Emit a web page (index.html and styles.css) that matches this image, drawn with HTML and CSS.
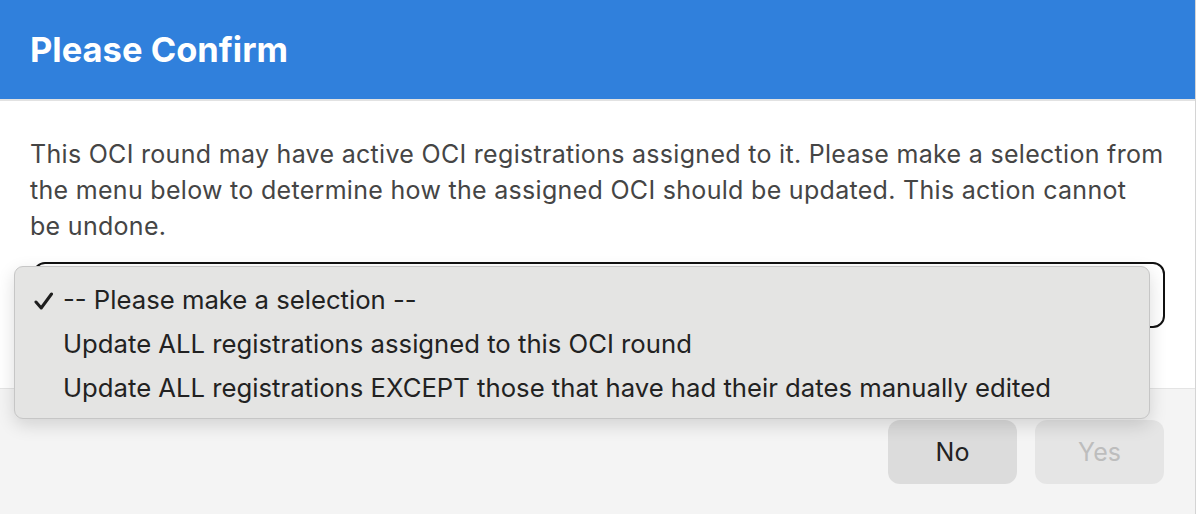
FILE: index.html
```html
<!DOCTYPE html>
<html>
<head>
<meta charset="utf-8">
<link rel="stylesheet" href="styles.css">
</head>
<body>
<div class="modal">
  <header class="modal-header">
    <h1 class="modal-title">Please Confirm</h1>
  </header>
  <section class="modal-body">
    <p class="message">This OCI round may have active OCI registrations assigned to it. Please make a selection from the menu below to determine how the assigned OCI should be updated. This action cannot<br>be undone.</p>
    <div class="select-wrap">
      <div class="select"></div>
      <ul class="menu">
        <li class="menu-item selected"><svg class="check" width="20" height="18" viewBox="0 0 20 18"><path d="M2 10 L7.2 16 L17.5 2" fill="none" stroke="#1e1e1e" stroke-width="3" stroke-linecap="round" stroke-linejoin="round"/></svg>-- Please make a selection --</li>
        <li class="menu-item">Update ALL registrations assigned to this OCI round</li>
        <li class="menu-item">Update ALL registrations EXCEPT those that have had their dates manually edited</li>
      </ul>
    </div>
  </section>
  <footer class="modal-footer">
    <button class="btn btn-no">No</button>
    <button class="btn btn-yes" disabled>Yes</button>
  </footer>
</div>
</body>
</html>
```

FILE: styles.css
```css
html, body {
  margin: 0;
  padding: 0;
  background: #f4f4f4;
}
.modal {
  width: 1196px;
  height: 514px;
  box-sizing: border-box;
  border-right: 1px solid #d4d4d4;
  display: flex;
  flex-direction: column;
  font-family: Inter, "Liberation Sans", sans-serif;
}
.modal-header {
  height: 99px;
  flex: none;
  background: #3080dc;
  border-bottom: 2px solid #e2e2e2;
  display: flex;
  align-items: center;
  padding-left: 30px;
}
.modal-title {
  margin: 0;
  color: #fff;
  font-size: 34.5px;
  font-weight: 700;
}
.modal-body {
  flex: none;
  background: #fff;
  padding: 35px 30px 0 30px;
  height: 252px;
  border-bottom: 1px solid #e4e4e4;
}
.message {
  margin: 0;
  font-size: 25px;
  line-height: 36px;
  letter-spacing: 0.3px;
  color: #454545;
}
.select-wrap {
  position: relative;
  margin-top: 18px;
}
.select {
  height: 62px;
  margin-left: 3px;
  border: 2px solid #111;
  border-radius: 12px;
  background: #fff;
}
.menu {
  position: absolute;
  left: -16px;
  top: 4px;
  width: 1136px;
  box-sizing: border-box;
  margin: 0;
  padding: 11px 0 8px 0;
  list-style: none;
  background: #e4e4e3;
  border: 1px solid #c6c6c6;
  border-radius: 9px;
  box-shadow: 0 6px 18px rgba(0, 0, 0, 0.14);
}
.menu-item {
  position: relative;
  height: 44px;
  line-height: 44px;
  padding-left: 48px;
  font-size: 25.7px;
  color: #222;
  white-space: nowrap;
}
.check {
  position: absolute;
  left: 19px;
  top: 14px;
}
.modal-footer {
  flex: 1;
  background: #f4f4f4;
  display: flex;
  justify-content: flex-end;
  align-items: flex-start;
  gap: 18px;
  padding: 31px 31px 0 0;
}
.btn {
  width: 129px;
  height: 64px;
  border: none;
  border-radius: 12px;
  font-family: Inter, "Liberation Sans", sans-serif;
  font-size: 25px;
}
.btn-no {
  background: #dcdcdc;
  color: #222;
}
.btn-yes {
  background: #e5e5e5;
  color: #bdbdbd;
}
```
